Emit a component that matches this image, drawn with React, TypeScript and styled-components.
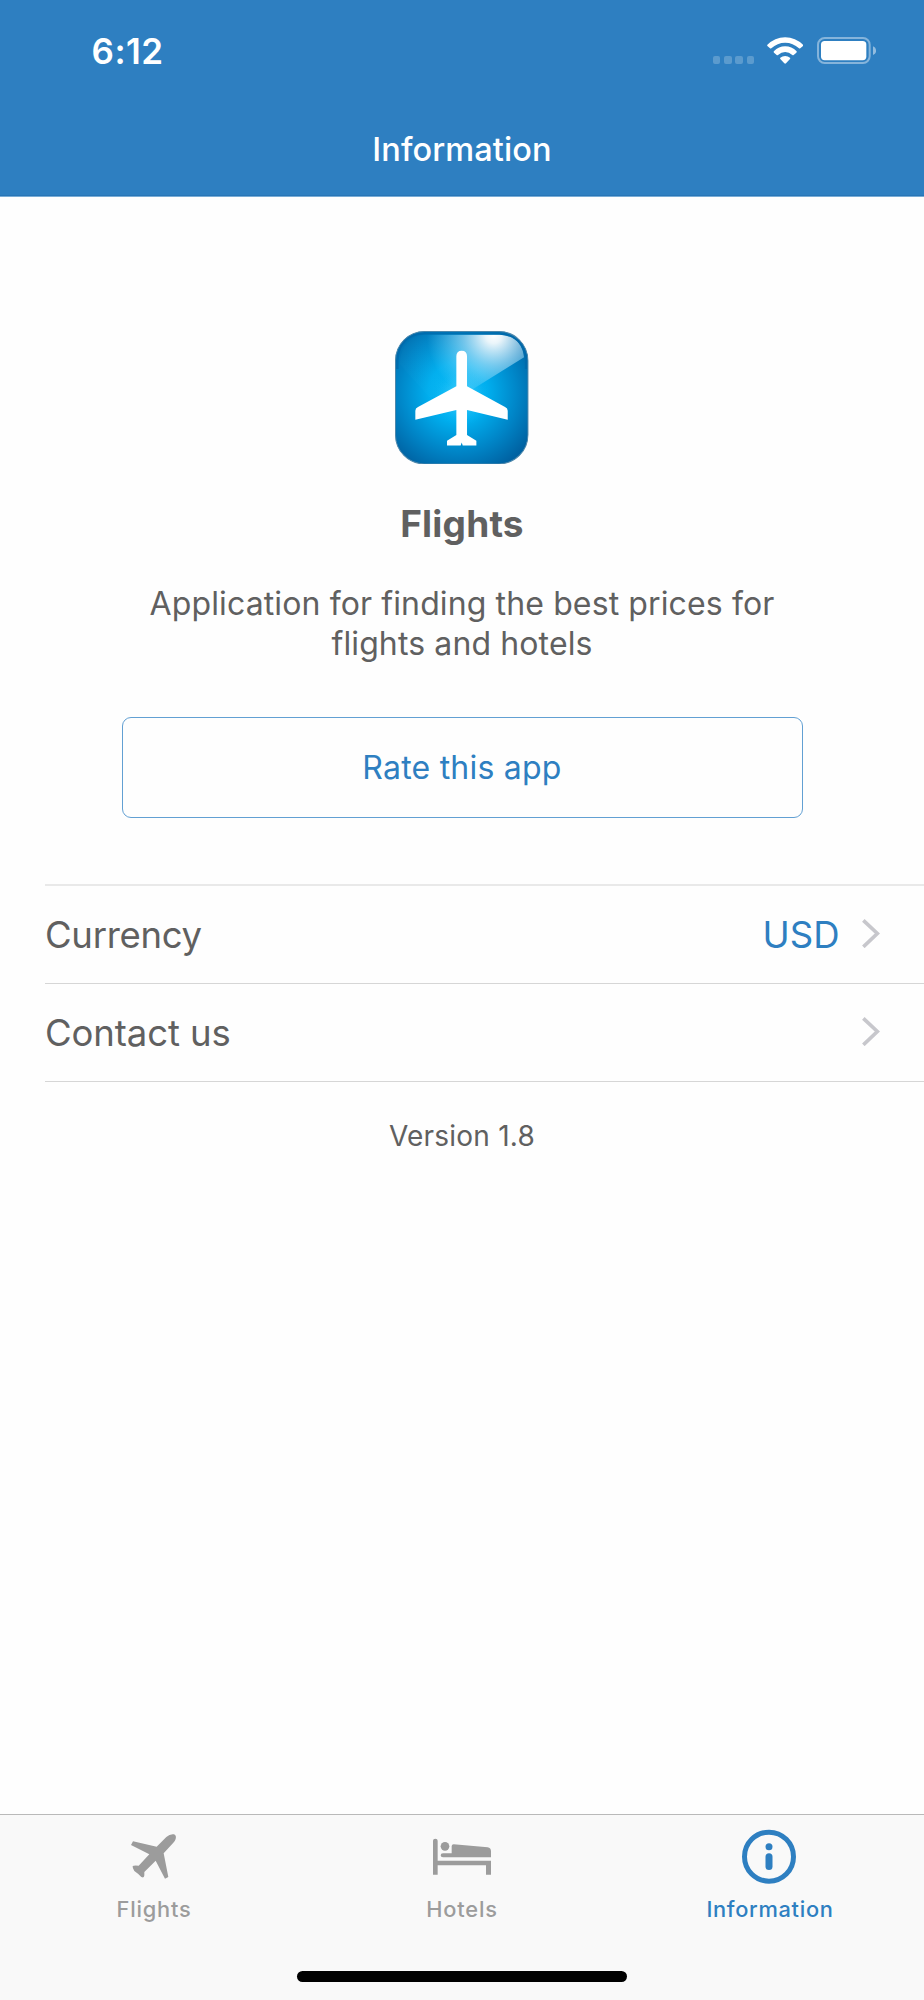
import React from "react";
import styled, { createGlobalStyle } from "styled-components";

const BLUE = "#2e7fc1";
const TEXT = "#606060";

const GlobalStyle = createGlobalStyle`
  * { box-sizing: border-box; }
  body {
    margin: 0;
    background: #fff;
    font-family: Inter, "Liberation Sans", sans-serif;
    color: ${TEXT};
  }
`;

const Screen = styled.div`
  display: flex;
  flex-direction: column;
  width: 924px;
  height: 2000px;
  background: #fefefe;
  overflow: hidden;
`;

const Header = styled.header`
  height: 197px;
  background: ${BLUE};
  border-bottom: 1px solid #78acd6;
  box-shadow: inset 0 -1px 0 #2875b6;
  color: #fff;
`;

const StatusBar = styled.div`
  display: flex;
  justify-content: space-between;
  padding: 30px 48px 0 91.5px;
  height: 130px;
`;

const Time = styled.div`
  font-size: 35px;
  line-height: 42px;
  font-weight: 570;
  letter-spacing: 0.5px;
`;

const StatusIcons = styled.div`
  display: flex;
  align-items: flex-end;
  height: 33.7px;
`;

const Dots = styled.div`
  display: flex;
  gap: 3.9px;
  margin-right: 13px;
`;

const Dot = styled.span`
  width: 7.3px;
  height: 7.3px;
  border-radius: 2px;
  background: rgba(255, 255, 255, 0.22);
`;

const WifiSvg = styled.svg`
  width: 36.33px;
  height: 27px;
  margin-right: 13.4px;
`;

const BatterySvg = styled.svg`
  width: 59.33px;
  height: 27px;
`;

const Title = styled.h1`
  margin: 0;
  text-align: center;
  font-size: 32.5px;
  line-height: 40px;
  font-weight: 450;
  letter-spacing: 0.1px;
`;

const Main = styled.main`
  flex: 1;
  display: flex;
  flex-direction: column;
  align-items: center;
  padding-top: 134px;
`;

const AppIconSvg = styled.svg`
  display: block;
  width: 133.4px;
  height: 133.4px;
`;

const AppName = styled.h2`
  margin: 37.8px 0 0;
  font-size: 37px;
  line-height: 44px;
  font-weight: 650;
  letter-spacing: 0.2px;
`;

const Description = styled.p`
  width: 680px;
  margin: 37.8px 0 0;
  text-align: center;
  font-size: 32px;
  line-height: 39.7px;
  letter-spacing: 0.12px;
`;

const RateButton = styled.button`
  width: 681px;
  height: 101px;
  margin-top: 53.3px;
  padding: 2px 0 0;
  border: 1px solid #62a0d3;
  border-radius: 9px;
  background: #fefefe;
  color: ${BLUE};
  font: 400 32px/40px Inter, "Liberation Sans", sans-serif;
  letter-spacing: 0.22px;
`;

const List = styled.ul`
  align-self: stretch;
  margin: 66px 0 0 45px;
  padding: 0;
  list-style: none;
  border-top: 2px solid #e9e9e9;
`;

const Row = styled.li`
  display: flex;
  align-items: center;
  height: 98px;
  padding: 2px 44px 0 0;
  border-bottom: 1px solid #d6d6d6;
  font-size: 36.5px;
`;

const RowLabel = styled.span<{ $tracking: number }>`
  flex: 1;
  letter-spacing: ${(p) => p.$tracking}px;
`;

const RowValue = styled.span`
  margin-right: 22.5px;
  color: ${BLUE};
`;

const ChevronSvg = styled.svg`
  width: 18px;
  height: 29px;
  margin-top: -4px;
`;

const Version = styled.p`
  margin: 37.8px 0 0;
  font-size: 28px;
  line-height: 34px;
  letter-spacing: 0.22px;
`;

const TabBar = styled.nav`
  display: flex;
  flex-wrap: wrap;
  align-content: flex-start;
  justify-content: center;
  height: 186px;
  border-top: 1px solid #b9b9b9;
  background: #f9f9f9;
`;

const Tab = styled.div<{ $active?: boolean }>`
  width: 308px;
  height: 156px;
  display: flex;
  flex-direction: column;
  align-items: center;
  color: ${(p) => (p.$active ? BLUE : "#9c9c9c")};
`;

const TabIcon = styled.div`
  height: 80.7px;
  display: flex;
  align-items: center;
  padding-top: 2px;

  svg { display: block; width: 60px; height: 60px; }
`;

const TabLabel = styled.span<{ $tracking: number }>`
  font-size: 21.8px;
  line-height: 26px;
  font-weight: 480;
  letter-spacing: ${(p) => p.$tracking}px;
`;

const HomeIndicator = styled.div`
  width: 330px;
  height: 11px;
  border-radius: 6px;
  background: #000;
`;

const Wifi = () => (
  <WifiSvg viewBox="231 50 109 81">
    <g fill="#fff">
      <path d="M231.500 74Q254 50.500 285.500 50.500T339.500 74Q340 76 338 78L331 84Q329 85.500 327 84Q309 67 285.500 67T244 84Q242 85.500 240 84L233 78Q231 76 231.500 74Z" />
      <path d="M251.500 93Q266 78 285.500 78T320 93Q321 95 319 97L311 104Q309 105.500 307 104Q297 95 285.500 95T264 104Q262 105.500 260 104L252 97Q250 95 251.500 93Z" />
      <path d="M271 112Q277 107 285.500 107T300 112Q301.500 114 300 116L288 129Q285.500 131.500 283 129L271 116Q269.500 114 271 112Z" />
    </g>
  </WifiSvg>
);

const Battery = () => (
  <BatterySvg viewBox="380 50 178 81">
    <rect x="383" y="53" width="155" height="75" rx="20" fill="none" stroke="#fff" strokeOpacity=".42" strokeWidth="6" />
    <rect x="392" y="62" width="136" height="57.500" rx="11" fill="#fff" />
    <path d="M548 78Q557.500 82 557.500 91T548 104Z" fill="#fff" fillOpacity=".48" />
  </BatterySvg>
);

const AppIcon = () => (
  <AppIconSvg viewBox="46 31 400 400">
    <defs>
      <radialGradient id="sky" gradientUnits="userSpaceOnUse" cx="235" cy="215" r="255">
        <stop offset="0" stopColor="#0abdf8" />
        <stop offset=".35" stopColor="#00aeee" />
        <stop offset=".7" stopColor="#0085c7" />
        <stop offset="1" stopColor="#0062a2" />
      </radialGradient>
      <radialGradient id="glow" gradientUnits="userSpaceOnUse" cx="246" cy="232" r="85">
        <stop offset="0" stopColor="#8adfff" stopOpacity=".75" />
        <stop offset="1" stopColor="#00b4f4" stopOpacity="0" />
      </radialGradient>
      <radialGradient id="shine" gradientUnits="userSpaceOnUse" cx="342" cy="44" r="200">
        <stop offset="0" stopColor="#fff" />
        <stop offset=".12" stopColor="#fff" stopOpacity=".92" />
        <stop offset=".45" stopColor="#d4f1ff" stopOpacity=".55" />
        <stop offset="1" stopColor="#8adfff" stopOpacity=".02" />
      </radialGradient>
    </defs>
    <rect x="47" y="32" width="398" height="398" rx="88" fill="url(#sky)" />
    <rect x="47" y="32" width="398" height="398" rx="88" fill="url(#glow)" />
    <path d="M136 42H360Q425 45 433 110L262 216L150 230L60 130Q65 50 136 42Z" fill="url(#shine)" />
    <path d="M53 145V120Q58 40 134 38H358Q434 42 439 120V145" fill="none" stroke="#0068aa" strokeWidth="7" strokeOpacity=".75" />
    <rect x="47.500" y="32.500" width="397" height="397" rx="87" fill="none" stroke="#4d87ab" strokeWidth="3" />
    <path d="M230 107Q230 90 246 90T262 107V197L376 259Q384 263 384 270V297L262 268V343L290 360V374H249L246 365L243 374H202V360L230 343V268L107 297V270Q107 263 115 259L230 197Z" fill="#fff" />
  </AppIconSvg>
);

const Chevron = () => (
  <ChevronSvg viewBox="485 146 54 87">
    <path d="M489 150L531 189.500L489 229.500" fill="none" stroke="#c7c7cc" strokeWidth="11" />
  </ChevronSvg>
);

const PlaneIcon = () => (
  <svg viewBox="102 64 180 180" fill="currentColor">
    <path d="M129 110L200 126L229 97Q240 87 252 89Q260 92 257 103Q255 109 250 114L221 146L235 217L225 222L197 168L163 202V212Q163 221 154 217L144 207L133 199Q127 190 128 184Q133 181 146 183L178 149L123 121Z" />
  </svg>
);

const BedIcon = () => (
  <svg viewBox="96 64 180 180" fill="currentColor">
    <path d="M99 210V108Q99 102 106 102T113 108V168H273V210H258V182H113V210Z" />
    <circle cx="135" cy="125" r="13" />
    <path d="M129 146H155V124Q155 119 161 119L263 128Q273 130 273 140V158H129Q122 158 122 152T129 146Z" />
  </svg>
);

const InfoIcon = () => (
  <svg viewBox="150 64 180 180" fill="currentColor">
    <circle cx="237" cy="156" r="73.500" fill="none" stroke="currentColor" strokeWidth="15" />
    <circle cx="237" cy="126" r="10.500" />
    <rect x="226.500" y="146" width="21" height="50" rx="10.500" />
  </svg>
);

export default function App() {
  return (
    <Screen>
      <GlobalStyle />
      <Header>
        <StatusBar>
          <Time>6:12</Time>
          <StatusIcons>
            <Dots><Dot /><Dot /><Dot /><Dot /></Dots>
            <Wifi />
            <Battery />
          </StatusIcons>
        </StatusBar>
        <Title>Information</Title>
      </Header>
      <Main>
        <AppIcon />
        <AppName>Flights</AppName>
        <Description>
          Application for finding the best prices for<br />flights and hotels
        </Description>
        <RateButton>Rate this app</RateButton>
        <List>
          <Row>
            <RowLabel $tracking={-0.3}>Currency</RowLabel>
            <RowValue>USD</RowValue>
            <Chevron />
          </Row>
          <Row>
            <RowLabel $tracking={-0.1}>Contact us</RowLabel>
            <Chevron />
          </Row>
        </List>
        <Version>Version 1.8</Version>
      </Main>
      <TabBar>
        <Tab><TabIcon><PlaneIcon /></TabIcon><TabLabel $tracking={0.8}>Flights</TabLabel></Tab>
        <Tab><TabIcon><BedIcon /></TabIcon><TabLabel $tracking={0.8}>Hotels</TabLabel></Tab>
        <Tab $active><TabIcon><InfoIcon /></TabIcon><TabLabel $tracking={0.7}>Information</TabLabel></Tab>
        <HomeIndicator />
      </TabBar>
    </Screen>
  );
}
